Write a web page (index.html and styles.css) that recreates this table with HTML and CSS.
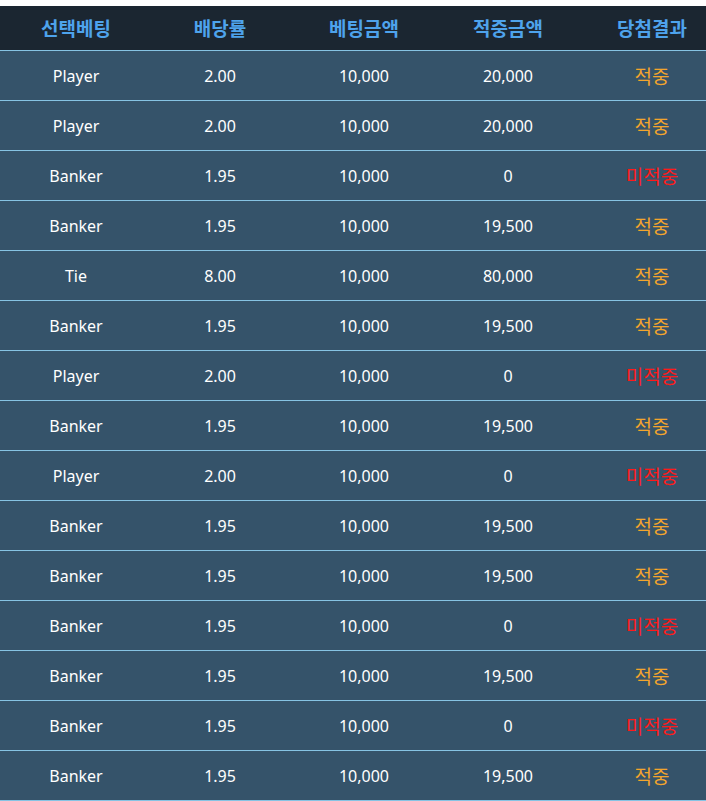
FILE: index.html
```html
<!DOCTYPE html>
<html lang="ko">
<head>
    <meta charset="UTF-8">
    <meta name="viewport" content="width=device-width, initial-scale=1.0">
    <title>베팅 내역</title>
    <link rel="stylesheet" href="styles.css">
</head>
<body>
    <div class="bet-table">
        <div class="bet-row head">
            <div>선택베팅</div>
            <div>배당률</div>
            <div>베팅금액</div>
            <div>적중금액</div>
            <div>당첨결과</div>
        </div>
        <div class="bet-row"><div>Player</div><div>2.00</div><div>10,000</div><div>20,000</div><div class="win">적중</div></div>
        <div class="bet-row"><div>Player</div><div>2.00</div><div>10,000</div><div>20,000</div><div class="win">적중</div></div>
        <div class="bet-row"><div>Banker</div><div>1.95</div><div>10,000</div><div>0</div><div class="lose">미적중</div></div>
        <div class="bet-row"><div>Banker</div><div>1.95</div><div>10,000</div><div>19,500</div><div class="win">적중</div></div>
        <div class="bet-row"><div>Tie</div><div>8.00</div><div>10,000</div><div>80,000</div><div class="win">적중</div></div>
        <div class="bet-row"><div>Banker</div><div>1.95</div><div>10,000</div><div>19,500</div><div class="win">적중</div></div>
        <div class="bet-row"><div>Player</div><div>2.00</div><div>10,000</div><div>0</div><div class="lose">미적중</div></div>
        <div class="bet-row"><div>Banker</div><div>1.95</div><div>10,000</div><div>19,500</div><div class="win">적중</div></div>
        <div class="bet-row"><div>Player</div><div>2.00</div><div>10,000</div><div>0</div><div class="lose">미적중</div></div>
        <div class="bet-row"><div>Banker</div><div>1.95</div><div>10,000</div><div>19,500</div><div class="win">적중</div></div>
        <div class="bet-row"><div>Banker</div><div>1.95</div><div>10,000</div><div>19,500</div><div class="win">적중</div></div>
        <div class="bet-row"><div>Banker</div><div>1.95</div><div>10,000</div><div>0</div><div class="lose">미적중</div></div>
        <div class="bet-row"><div>Banker</div><div>1.95</div><div>10,000</div><div>19,500</div><div class="win">적중</div></div>
        <div class="bet-row"><div>Banker</div><div>1.95</div><div>10,000</div><div>0</div><div class="lose">미적중</div></div>
        <div class="bet-row"><div>Banker</div><div>1.95</div><div>10,000</div><div>19,500</div><div class="win">적중</div></div>
    </div>
</body>
</html>
```

FILE: styles.css
```css
body {
    margin: 0;
    padding-top: 6px;
    background: #ffffff;
    font-family: "Noto Sans", "Noto Sans CJK KR", sans-serif;
    font-size: 16px;
}
.bet-table {
    background: #35536a;
    border-bottom: 1px solid #86c3e3;
    overflow: hidden;
}
.bet-row {
    display: grid;
    grid-template-columns: repeat(5, 144px);
    padding-left: 4px;
    height: 49px;
    align-items: center;
    border-top: 1px solid #86c3e3;
    color: #ffffff;
}
.bet-row > div {
    text-align: center;
}
.bet-row.head {
    height: 44px;
    border-top: none;
    background: #1b2631;
    color: #4ea3ec;
    font-weight: bold;
    font-size: 19px;
}
.win,
.lose {
    font-size: 19px;
}
.win {
    color: #f4a52c;
}
.lose {
    color: #ff1a1a;
}
```
